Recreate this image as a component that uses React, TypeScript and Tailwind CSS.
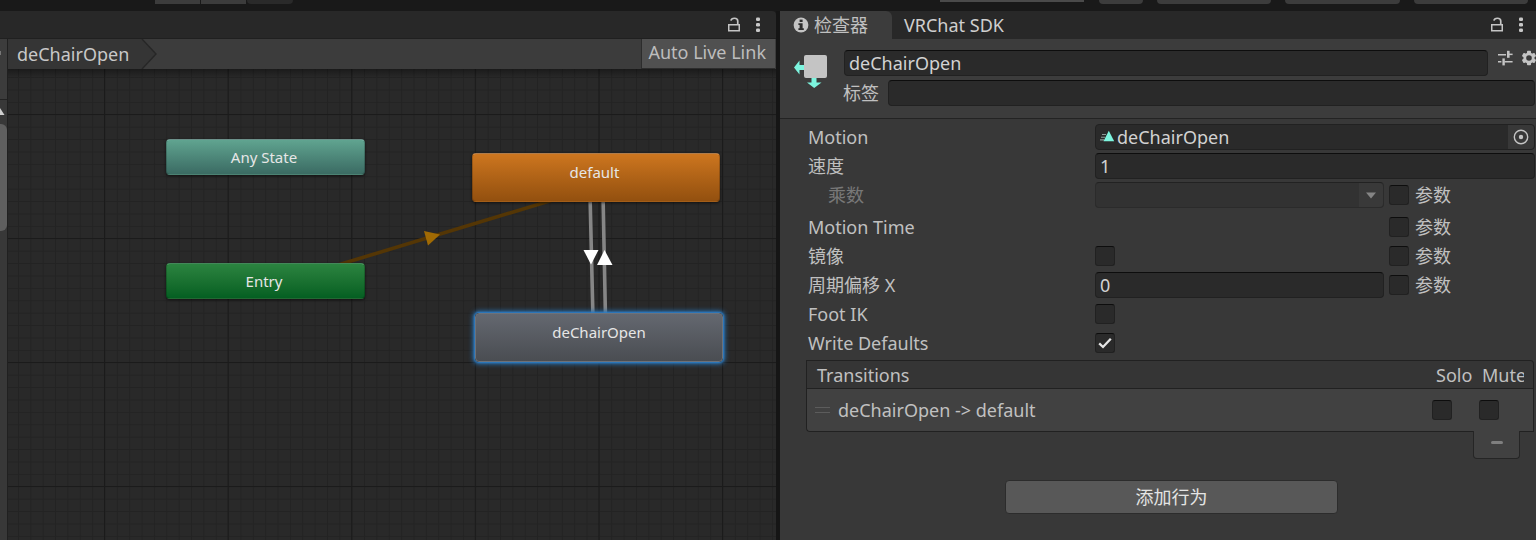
import React from "react";

const FIELD =
  "h-[26px] min-w-0 rounded border border-[#212121] border-t-[#0d0d0d] bg-[#2a2a2a] px-1 text-lg leading-6 text-[#d2d2d2] outline-none";

function UnlockIcon() {
  return (
    <svg width="14" height="16" viewBox="0 0 14 16" fill="none" stroke="#c4c4c4">
      <rect x="1.75" y="7.75" width="10.5" height="6" strokeWidth="1.5" />
      <path d="M10.75 8V4C10.75 2 9.2 1.25 7.4 1.25C5.6 1.25 4.2 2 3.9 3.700" strokeWidth="1.7" />
    </svg>
  );
}

function DotsIcon() {
  return (
    <svg width="4" height="16" viewBox="0 0 4 16" fill="#c8c8c8">
      <rect x="0" y="0.5" width="4" height="3.6" rx="1.3" />
      <rect x="0" y="6" width="4" height="3.6" rx="1.3" />
      <rect x="0" y="11.5" width="4" height="3.6" rx="1.3" />
    </svg>
  );
}

function InfoIcon() {
  return (
    <svg width="16" height="16" viewBox="0 0 16 16">
      <circle cx="8" cy="8" r="7.4" fill="#c4c4c4" />
      <rect x="6.6" y="2.6" width="3" height="2.4" fill="#2b2b2b" />
      <path d="M5.4 6.2H9.6V11.2H10.8V13H5.4V11.2H6.6V8H5.4Z" fill="#2b2b2b" />
    </svg>
  );
}

function StateIcon() {
  return (
    <svg width="34" height="34" viewBox="0 0 34 34">
      <path d="M0 13.5L5.5 6.5V11H11V16H5.5V20.5Z" fill="#7df5df" />
      <path d="M17.5 23H22.5V28.5H27.5L20.2 34L13 28.5H17.5Z" fill="#7df5df" />
      <rect x="10" y="1" width="23" height="23" rx="2" fill="#c4c4c4" />
    </svg>
  );
}

function PresetIcon() {
  return (
    <svg width="15" height="16" viewBox="0 0 15 16" fill="#c4c4c4">
      <rect x="0" y="4" width="8" height="1.5" />
      <rect x="9" y="0.8" width="2.6" height="7" />
      <rect x="11" y="3.6" width="3.6" height="1.5" />
      <rect x="0" y="11" width="3.4" height="1.5" />
      <rect x="4.4" y="8.4" width="2.4" height="7" />
      <rect x="6.4" y="11" width="8.2" height="1.5" />
    </svg>
  );
}

function GearIcon() {
  return (
    <svg width="16" height="16" viewBox="0 0 16 16">
      <g fill="#c4c4c4">
        <rect x="6" y="0.8" width="4" height="14.4" rx="0.8" />
        <rect x="6" y="0.8" width="4" height="14.4" rx="0.8" transform="rotate(60 8 8)" />
        <rect x="6" y="0.8" width="4" height="14.4" rx="0.8" transform="rotate(120 8 8)" />
        <circle cx="8" cy="8" r="5.6" />
      </g>
      <circle cx="8" cy="8" r="2.8" fill="#3a3a3a" />
    </svg>
  );
}

function ClipIcon() {
  return (
    <svg width="15" height="14" viewBox="0 0 15 14">
      <path d="M2 4.500H6M1 7.2H5M0 9.900H4" stroke="#8b9a97" strokeWidth="1.1" />
      <path d="M8.800 0.800L14.200 11.200H3.500Z" fill="#7df5df" />
    </svg>
  );
}

function PanelActions() {
  return (
    <div className="ml-auto flex items-center gap-[15px]">
      <button type="button" aria-label="Lock">
        <UnlockIcon />
      </button>
      <button type="button" aria-label="Menu">
        <DotsIcon />
      </button>
    </div>
  );
}

function Tick({ id, label, checked = false }: { id: string; label?: string; checked?: boolean }) {
  return (
    <span className="relative block size-5 shrink-0">
      <input
        id={id}
        type="checkbox"
        aria-label={label}
        defaultChecked={checked}
        className="peer block size-5 appearance-none rounded-[3px] border border-[#212121] border-t-[#0d0d0d] bg-[#2a2a2a]"
      />
      <svg
        className="pointer-events-none absolute inset-0 hidden peer-checked:block"
        width="20"
        height="20"
        viewBox="0 0 20 20"
      >
        <path d="M4.2 10.4L8 14L15.8 5.8" fill="none" stroke="#e6e6e6" strokeWidth="2.3" />
      </svg>
    </span>
  );
}

function Param({ id }: { id: string }) {
  return (
    <div className="flex w-[146px] shrink-0 items-center gap-[6px]">
      <Tick id={id} />
      <label htmlFor={id}>参数</label>
    </div>
  );
}

function Row({
  label,
  htmlFor,
  muted = false,
  param,
  children,
}: {
  label: string;
  htmlFor?: string;
  muted?: boolean;
  param?: string;
  children?: React.ReactNode;
}) {
  return (
    <div className="flex h-[26px] items-center gap-[5px]">
      <div className="flex min-w-0 flex-1 items-center">
        <label
          htmlFor={htmlFor}
          className={muted ? "w-[287px] shrink-0 pl-5 text-[#787878]" : "w-[287px] shrink-0"}
        >
          {label}
        </label>
        {children}
      </div>
      {param && <Param id={param} />}
    </div>
  );
}

function Graph() {
  const node =
    "absolute flex justify-center rounded border border-black/20 border-t-white/25 bg-linear-to-b pr-[3px] text-[15px] leading-5 text-[#e6e6e6] shadow-[0_1px_3px_rgba(0,0,0,0.6)]";
  return (
    <div className="relative flex-1 overflow-hidden bg-[#292929]">
      <svg className="absolute inset-0 size-full">
        <defs>
          <pattern id="minor" x="96.5" y="45.3" width="12.36" height="12.4" patternUnits="userSpaceOnUse">
            <path d="M0.5 0V12.4M0 0.5H12.36" stroke="#232323" />
          </pattern>
          <pattern id="major" x="96" y="45" width="123.6" height="124" patternUnits="userSpaceOnUse">
            <path d="M0.5 0V124M0 0.5H123.6" stroke="#1b1b1b" />
          </pattern>
          <linearGradient id="shade" x1="0" y1="0" x2="0" y2="1">
            <stop offset="0" stopColor="#000" stopOpacity="0.35" />
            <stop offset="1" stopColor="#000" stopOpacity="0" />
          </linearGradient>
        </defs>
        <rect width="100%" height="100%" fill="url(#minor)" />
        <rect width="100%" height="100%" fill="url(#major)" />
        <rect width="100%" height="9" fill="url(#shade)" />
        <path d="M315 200.500L553 128.500" stroke="#543605" strokeWidth="3.6" />
        <path d="M416 162L432 165.5L420 176.5Z" fill="#a06a04" />
        <path d="M582 125L585 250M595 125L597.5 250" stroke="#868686" strokeWidth="3.6" />
        <path d="M575.5 181H590.5L583 195.500Z" fill="#fff" />
        <path d="M596.500 181L604.500 196H589Z" fill="#fff" />
      </svg>
      <div className={`${node} left-[158px] top-[70px] h-9 w-[199px] items-center from-[#60a490] to-[#3b6b63]`}>
        Any State
      </div>
      <div className={`${node} left-[158px] top-[194px] h-9 w-[199px] items-center from-[#2b8440] to-[#045f22]`}>
        Entry
      </div>
      <div className={`${node} left-[464px] top-[84px] h-[49px] w-[248px] pt-2 from-[#cd761f] to-[#93500f]`}>
        default
      </div>
      <div className="absolute left-[467px] top-[244px] flex h-[49px] w-[248px] justify-center rounded border border-[#6c727b] bg-linear-to-b from-[#646870] to-[#4a4d52] pt-2 text-[15px] leading-5 text-[#e6e6e6] shadow-[0_0_2px_1px_#2f80c8,0_0_5px_2px_#2a70b0]">
        deChairOpen
      </div>
    </div>
  );
}

function AnimatorPanel() {
  return (
    <section className="flex min-w-0 flex-col border-r-4 border-[#151515]">
      <header className="flex h-7 items-center rounded-tr border-b border-[#202020] bg-[#282828] pr-4">
        <PanelActions />
      </header>
      <div className="flex flex-1">
        <aside className="flex w-2 shrink-0 flex-col border-r border-[#202020] bg-[#383838]">
          <div className="flex h-[61px] flex-col border-b border-[#232323] bg-[#3c3c3c] pt-3">
            <span className="h-1 w-px bg-[#777777]" />
          </div>
          <svg className="mt-2 block" width="7" height="8" viewBox="0 0 7 8">
            <path d="M0 0L4.500 7H0Z" fill="#d0d0d0" />
          </svg>
          <span className="mt-2 h-[107px] rounded-r-md bg-[#5f5f5f]" />
        </aside>
        <div className="flex min-w-0 flex-1 flex-col">
          <nav className="flex h-[30px] items-stretch bg-[#3c3c3c]">
            <a href="#layer" className="flex items-center bg-[#353535] pr-[3px] pl-[9px] text-lg leading-6 text-[#c8c8c8]">
              deChairOpen
            </a>
            <svg width="26" height="30" viewBox="0 0 26 30">
              <path d="M0 0H10L24 15L10 30H0Z" fill="#353535" />
              <path d="M10 0L24 15L10 30" fill="none" stroke="#272727" strokeWidth="1.4" />
            </svg>
            <button
              type="button"
              className="mr-px ml-auto flex items-start border-b border-l border-[#2c2c2c] bg-[#505050] pr-[9px] pl-[6px] text-lg leading-[26px] text-[#bdbdbd]"
            >
              Auto Live Link
            </button>
          </nav>
          <Graph />
        </div>
      </div>
    </section>
  );
}

function Transitions() {
  return (
    <div className="-mt-px mr-px -ml-[2px] pt-[2px]">
      <table className="w-full table-fixed border-separate border-spacing-0 text-left">
        <colgroup>
          <col />
          <col className="w-[47px]" />
          <col className="w-[55px]" />
        </colgroup>
        <thead>
          <tr className="h-[29px] bg-[#353535]">
            <th className="border-y border-l border-[#212121] pl-[10px] font-normal">Transitions</th>
            <th className="border-y border-[#212121] pl-1 font-normal">Solo</th>
            <th className="rounded-tr border-y border-r border-[#212121] pl-[3px] font-normal">
              <div className="w-[42px] overflow-hidden">Mute</div>
            </th>
          </tr>
        </thead>
        <tbody>
          <tr className="h-[43px] bg-[#414141]">
            <td className="rounded-bl border-b border-l border-[#212121] pl-2">
              <div className="flex items-center gap-2">
                <svg width="15" height="8" viewBox="0 0 15 8">
                  <path d="M0 1.500H15M0 6.500H15" stroke="#5c5c5c" strokeWidth="1.200" />
                </svg>
                deChairOpen -&gt; default
              </div>
            </td>
            <td className="border-b border-[#212121]">
              <Tick id="solo" label="Solo" />
            </td>
            <td className="border-r border-b border-[#212121]">
              <Tick id="mute" label="Mute" />
            </td>
          </tr>
        </tbody>
      </table>
      <button
        type="button"
        aria-label="Remove transition"
        className="relative -mt-px mr-[14px] ml-auto flex h-7 w-[47px] items-center justify-center rounded-b border-x border-b border-[#252525] bg-[#414141]"
      >
        <span className="mb-1 h-[3px] w-3 rounded-full bg-[#7f7f7f]" />
      </button>
    </div>
  );
}

function Inspector() {
  return (
    <section className="flex min-w-0 flex-col overflow-hidden bg-[#383838] text-lg leading-6 text-[#c0c0c0]">
      <header className="flex h-7 items-stretch bg-[#282828] pr-[13px]">
        <button type="button" className="flex w-28 items-center gap-[5px] rounded-tr-md bg-[#3c3c3c] pl-[13px]">
          <InfoIcon />
          检查器
        </button>
        <button type="button" className="px-3 text-[#cfcfcf]">
          VRChat SDK
        </button>
        <PanelActions />
      </header>
      <div className="flex items-start gap-4 border-b border-[#232323] bg-[#3c3c3c] pt-[11px] pb-3 pl-[14px]">
        <div className="mt-1 shrink-0">
          <StateIcon />
        </div>
        <div className="flex min-w-0 flex-1 flex-col gap-1">
          <div className="flex items-start">
            <input aria-label="Name" defaultValue="deChairOpen" className={`${FIELD} flex-1`} />
            <button type="button" aria-label="Presets" className="ml-[10px] shrink-0">
              <PresetIcon />
            </button>
            <button type="button" aria-label="Settings" className="-mr-px ml-2 shrink-0">
              <GearIcon />
            </button>
          </div>
          <div className="flex items-center gap-[9px] pr-px">
            <label htmlFor="tag" className="-ml-px shrink-0">
              标签
            </label>
            <input id="tag" className={`${FIELD} flex-1`} />
          </div>
        </div>
      </div>
      <div className="flex flex-col gap-[3px] pt-[5px] pr-px pl-7">
        <Row label="Motion" htmlFor="motion">
          <div className="flex h-[26px] min-w-0 flex-1 items-center rounded border border-[#212121] bg-[#2a2a2a] pl-1">
            <ClipIcon />
            <input
              id="motion"
              readOnly
              defaultValue="deChairOpen"
              className="min-w-0 flex-1 bg-transparent pl-[2px] text-[#d2d2d2] outline-none"
            />
            <button
              type="button"
              aria-label="Select motion"
              className="flex h-6 w-[26px] items-center justify-center rounded-r bg-[#383838]"
            >
              <svg width="16" height="16" viewBox="0 0 16 16">
                <circle cx="8" cy="8" r="6.700" fill="none" stroke="#c4c4c4" strokeWidth="1.400" />
                <circle cx="8" cy="8" r="2.200" fill="#c4c4c4" />
              </svg>
            </button>
          </div>
        </Row>
        <Row label="速度" htmlFor="speed">
          <input id="speed" defaultValue="1" className={`${FIELD} flex-1`} />
        </Row>
        <Row label="乘数" htmlFor="multiplier" muted param="multiplier-param">
          <div className="relative min-w-0 flex-1">
            <select
              id="multiplier"
              disabled
              className="block h-[26px] w-full appearance-none rounded border border-[#2b2b2b] border-t-[#222222] bg-[#323232]"
            />
            <span className="pointer-events-none absolute inset-y-px right-px flex w-6 items-center justify-center rounded-r bg-[#393939]">
              <svg width="10" height="7" viewBox="0 0 10 7">
                <path d="M0 0.500H10L5 6.500Z" fill="#858585" />
              </svg>
            </span>
          </div>
        </Row>
        <div className="h-0" />
        <Row label="Motion Time" htmlFor="time-param" param="time-param" />
        <Row label="镜像" htmlFor="mirror" param="mirror-param">
          <Tick id="mirror" />
        </Row>
        <Row label="周期偏移 X" htmlFor="offset" param="offset-param">
          <input id="offset" defaultValue="0" className={`${FIELD} flex-1`} />
        </Row>
        <Row label="Foot IK" htmlFor="foot-ik">
          <Tick id="foot-ik" />
        </Row>
        <Row label="Write Defaults" htmlFor="write-defaults">
          <Tick id="write-defaults" checked />
        </Row>
        <Transitions />
        <button
          type="button"
          className="mx-auto mt-[18px] h-[34px] w-[333px] rounded border border-[#2c2c2c] bg-[#585858] text-[#e4e4e4]"
        >
          添加行为
        </button>
      </div>
    </section>
  );
}

export default function App() {
  return (
    <div className="flex min-h-screen flex-col bg-[#191919] font-['Noto_Sans','Noto_Sans_CJK_SC',sans-serif]">
      <div className="flex h-[11px] items-start overflow-hidden pr-2">
        <span className="ml-[155px] h-1 w-[45px] bg-[#3c3c3c]" />
        <span className="ml-px h-1 w-[45px] bg-[#3c3c3c]" />
        <span className="ml-px h-1 w-[46px] rounded-b bg-[#2a2a2a]" />
        <span className="ml-auto h-[2px] w-36 bg-[#4a4a4a]" />
        <div className="ml-[15px] flex gap-[14px]">
          <span className="h-1 w-11 rounded-b bg-[#3c3c3c]" />
          <span className="h-1 w-[114px] rounded-b bg-[#3c3c3c]" />
          <span className="h-1 w-[115px] rounded-b bg-[#3c3c3c]" />
          <span className="h-1 w-[114px] rounded-b bg-[#3c3c3c]" />
        </div>
      </div>
      <main className="grid flex-1 grid-cols-[minmax(0,65fr)_minmax(0,63fr)]">
        <AnimatorPanel />
        <Inspector />
      </main>
    </div>
  );
}
